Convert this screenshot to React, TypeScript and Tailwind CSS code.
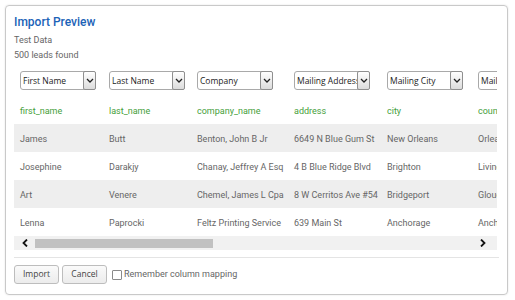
import React from 'react';

interface Lead {
    first_name: string;
    last_name: string;
    company_name: string;
    address: string;
    city: string;
    county: string;
}

const fields = ['first_name', 'last_name', 'company_name', 'address', 'city', 'county'] as const;
const mappings = ['First Name', 'Last Name', 'Company', 'Mailing Address', 'Mailing City', 'Mailing County'];
const widths = [89, 88, 97, 93, 91, 90];

const leads: Lead[] = [
    { first_name: 'James', last_name: 'Butt', company_name: 'Benton, John B Jr', address: '6649 N Blue Gum St', city: 'New Orleans', county: 'Orleans' },
    { first_name: 'Josephine', last_name: 'Darakjy', company_name: 'Chanay, Jeffrey A Esq', address: '4 B Blue Ridge Blvd', city: 'Brighton', county: 'Livingston' },
    { first_name: 'Art', last_name: 'Venere', company_name: 'Chemel, James L Cpa', address: '8 W Cerritos Ave #54', city: 'Bridgeport', county: 'Gloucester' },
    { first_name: 'Lenna', last_name: 'Paprocki', company_name: 'Feltz Printing Service', address: '639 Main St', city: 'Anchorage', county: 'Anchorage' },
];

const FakeSelect: React.FC<{ value: string }> = ({ value }) => (
    <div className="flex h-[19px] w-[76px] items-stretch rounded-[3px] border border-[#a9a9a9] bg-white font-['Open_Sans',sans-serif] text-[8.5px] text-[#222]">
        <div className="flex-1 overflow-hidden whitespace-nowrap pl-[2px] leading-[17px]">{value}</div>
        <div className="my-[-1px] mr-[-1px] flex w-[13px] shrink-0 items-center justify-center rounded-[2px] border border-[#8f8f8f] bg-gradient-to-b from-white to-[#dcdcdc]">
            <svg width="8" height="5" viewBox="0 0 8 5">
                <path d="M1 1 L4 4 L7 1" fill="none" stroke="#222" strokeWidth="1.3" />
            </svg>
        </div>
    </div>
);

const App: React.FC = () => {
    return (
        <div className="h-[300px] w-[515px] bg-white pl-[5px] pt-[5px] font-['Roboto',sans-serif]">
            <div className="flex h-[290px] w-[503px] flex-col rounded-[4px] border border-[#c9c9c9] px-2 shadow-[0_0_2px_rgba(0,0,0,0.12)]">
                <h1 className="mt-[6px] text-[12px] font-medium leading-[20px] text-[#1c63b7]">Import Preview</h1>
                <p className="mt-[1px] text-[9px] leading-[15px] text-[#666]">Test Data</p>
                <p className="text-[9px] leading-[15px] text-[#666]">500 leads found</p>

                <div className="w-[483px] overflow-hidden">
                    <table className="table-fixed border-collapse text-left text-[9px]" style={{ width: widths.reduce((a, b) => a + b, 0) }}>
                        <colgroup>
                            {widths.map((w, i) => (
                                <col key={i} style={{ width: w }} />
                            ))}
                        </colgroup>
                        <thead>
                            <tr className="h-[33px]">
                                {mappings.map((m) => (
                                    <th key={m} className="px-[6px] pt-[8px] align-top font-normal">
                                        <FakeSelect value={m} />
                                    </th>
                                ))}
                            </tr>
                            <tr className="h-[28px]">
                                {fields.map((f) => (
                                    <th key={f} className="overflow-hidden whitespace-nowrap px-[6px] pt-[4px] font-normal text-[#45a03a]">{f}</th>
                                ))}
                            </tr>
                        </thead>
                        <tbody>
                            {leads.map((lead, i) => (
                                <tr key={lead.first_name} className={`h-[28px] ${i % 2 === 0 ? 'bg-[#eeeeee]' : 'bg-white'}`}>
                                    {fields.map((f) => (
                                        <td key={f} className="overflow-hidden whitespace-nowrap px-[6px] pt-[4px] text-[#666]">{lead[f]}</td>
                                    ))}
                                </tr>
                            ))}
                        </tbody>
                    </table>

                    <div className="flex h-[14px] items-center bg-[#f1f1f1]">
                        <div className="flex w-[21px] items-center justify-center">
                            <svg width="6" height="8" viewBox="0 0 6 8">
                                <path d="M5 0.5 L1.5 4 L5 7.5" fill="none" stroke="#111" strokeWidth="1.8" />
                            </svg>
                        </div>
                        <div className="h-[9px] w-[178px] bg-[#c1c1c1]" />
                        <div className="flex-1" />
                        <div className="flex w-[28px] items-center justify-center">
                            <svg width="6" height="8" viewBox="0 0 6 8">
                                <path d="M1 0.5 L4.5 4 L1 7.5" fill="none" stroke="#111" strokeWidth="1.8" />
                            </svg>
                        </div>
                    </div>
                </div>

                <div className="mt-[7px] h-px w-[485px] bg-[#e4e4e4]" />

                <div className="mt-[7px] flex items-center">
                    <button className="h-[19px] w-[45px] rounded-[3px] border border-[#bdbdbd] bg-gradient-to-b from-[#fafafa] to-[#ececec] font-['Open_Sans',sans-serif] text-[8.5px] text-[#444]">Import</button>
                    <button className="ml-[3px] h-[19px] w-[45px] rounded-[3px] border border-[#bdbdbd] bg-gradient-to-b from-[#fafafa] to-[#ececec] font-['Open_Sans',sans-serif] text-[8.5px] text-[#444]">Cancel</button>
                    <label className="ml-[5px] flex items-center text-[9px] text-[#666]">
                        <span className="mr-[2px] h-[10px] w-[10px] rounded-[1px] border border-[#8a8a8a] bg-white" />
                        Remember column mapping
                    </label>
                </div>
            </div>
        </div>
    );
};

export default App;
